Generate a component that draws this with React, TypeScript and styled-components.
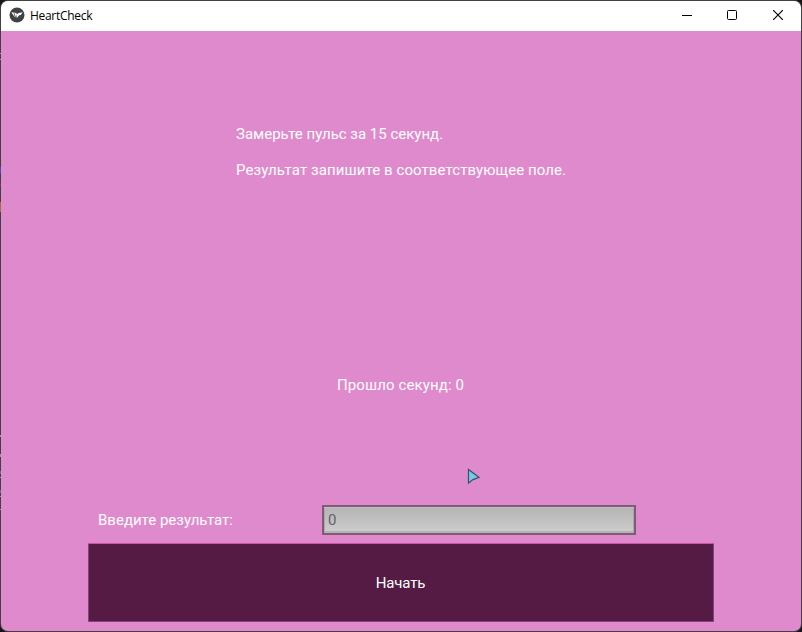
import React from 'react';
import styled, { createGlobalStyle } from 'styled-components';

const GlobalStyle = createGlobalStyle`
  * { box-sizing: border-box; }
  html, body { margin: 0; width: 802px; height: 632px; overflow: hidden; background: #161415; }
`;

/* The window's thin frame lets a few specks of the desktop show at its left edge. */
const Frame = styled.div`
  width: 802px;
  height: 632px;
  padding: 1px;
  border-radius: 8px;
  background:
    linear-gradient(#999, #999) 0 53px / 1px 1px no-repeat,
    linear-gradient(#999, #999) 0 59px / 1px 1px no-repeat,
    linear-gradient(#3d55b5, #3d55b5) 0 167px / 1px 6px no-repeat,
    linear-gradient(#87383b, #87383b) 0 183px / 1px 3px no-repeat,
    linear-gradient(#a0713f, #a0713f) 0 202px / 1px 10px no-repeat,
    linear-gradient(#999, #999) 0 435px / 1px 2px no-repeat,
    linear-gradient(#999, #999) 0 454px / 1px 3px no-repeat,
    linear-gradient(#4778ac, #4778ac) 0 471px / 1px 3px no-repeat,
    linear-gradient(#999, #999) 0 477px / 1px 1px no-repeat,
    linear-gradient(#4778ac, #4778ac) 0 490px / 1px 3px no-repeat,
    linear-gradient(#999, #999) 0 496px / 1px 1px no-repeat,
    linear-gradient(#999, #999) 0 509px / 1px 1px no-repeat,
    #414042;
`;

const Window = styled.main`
  width: 800px;
  height: 630px;
  display: flex;
  flex-direction: column;
  border-radius: 7px;
  overflow: hidden;
  background: #df8acc;
`;

const TitleBar = styled.header`
  height: 30px;
  flex: none;
  display: flex;
  align-items: center;
  padding: 0 0 2px 8px;
  background: #fff;
`;

const Title = styled.span`
  flex: 1;
  margin: 2px 0 0 5px;
  font: 12px/16px "Open Sans", "Noto Sans", sans-serif;
  letter-spacing: -0.3px;
  color: #000;
`;

const Controls = styled.div`
  display: flex;
`;

const Control = styled.button`
  width: 46px;
  height: 28px;
  padding: 0;
  border: 0;
  background: none;
  display: grid;
  place-items: center;

  &:first-child { width: 45px; padding-left: 1px; }
`;

const Content = styled.section`
  position: relative;
  height: 600px;
  display: flex;
  flex-direction: column;
  font: 15px/18px Roboto, sans-serif;
  color: #fff;
`;

const Instructions = styled.div`
  height: 241px;
  display: flex;
  flex-direction: column;
  justify-content: center;
  gap: 18px;
  padding-left: 235px;
`;

const Line = styled.p<{ $spacing?: number }>`
  margin: 0;
  white-space: nowrap;
  letter-spacing: ${({ $spacing = 0 }) => $spacing}px;
`;

const Timer = styled.div`
  height: 225px;
  margin-bottom: 8px;
  padding-right: 1px;
  display: flex;
  align-items: center;
  justify-content: center;
`;

const Form = styled.form`
  width: 626px;
  margin-left: 87px;
`;

const Row = styled.div`
  height: 30px;
  display: grid;
  grid-template-columns: 234px 314px;
  align-items: center;
`;

const Label = styled.label`
  padding-left: 10px;
  white-space: nowrap;
`;

const Input = styled.input`
  width: 314px;
  height: 30px;
  padding: 0 4px;
  border: 2px solid #83597a;
  border-radius: 0;
  outline: 0;
  background: linear-gradient(#b3b3b3, #cecece);
  box-shadow: inset 0 1px #c1bfc0, inset 1px 0 #aaa7a9, inset -1px 0 #aaa7a9, inset 0 -2px #b4b3b3;
  font: 15px/18px Roboto, sans-serif;
  color: #626262;
`;

const StartButton = styled.button`
  width: 626px;
  height: 79px;
  margin-top: 8px;
  padding: 0 1px 0 0;
  border: 1px solid #85437a;
  border-top-color: #cd51ad;
  border-radius: 1px;
  background: #551b45;
  font: 15px/18px Roboto, sans-serif;
  letter-spacing: -0.12px;
  color: #fff;
`;

const Cursor = styled.svg`
  position: absolute;
  left: 466px;
  top: 437px;
`;

const AppIcon = () => (
  <svg width="16" height="16" viewBox="0 0 16 16">
    <circle cx="8" cy="8" r="7.5" fill="#414245" />
    <path d="M2.3 5.2 4.6 5.6 6 10.4ZM5.1 5.3 8 6.8 7.1 11ZM8 6.9 9.9 6.1 13.7 5.3 11.8 7.9 10.2 8.3 7.9 11Z" fill="#fff" />
  </svg>
);

export default function App() {
  return (
    <>
      <GlobalStyle />
      <Frame>
        <Window>
          <TitleBar>
            <AppIcon />
            <Title>HeartCheck</Title>
            <Controls>
              <Control aria-label="Minimize">
                <svg width="10" height="10"><path d="M0 5.5H10" stroke="#000" /></svg>
              </Control>
              <Control aria-label="Maximize">
                <svg width="10" height="10"><rect x=".5" y=".5" width="9" height="9" rx="1" fill="none" stroke="#000" /></svg>
              </Control>
              <Control aria-label="Close">
                <svg width="10" height="10"><path d="M0 0 10 10M10 0 0 10" stroke="#000" strokeWidth="1.15" /></svg>
              </Control>
            </Controls>
          </TitleBar>
          <Content>
            <Instructions>
              <Line>Замерьте пульс за 15 секунд.</Line>
              <Line $spacing={0.09}>Результат запишите в соответствующее поле.</Line>
            </Instructions>
            <Timer><Line $spacing={0.12}>Прошло секунд: 0</Line></Timer>
            <Form>
              <Row>
                <Label htmlFor="result">Введите результат:</Label>
                <Input id="result" defaultValue="0" />
              </Row>
              <StartButton type="button">Начать</StartButton>
            </Form>
            <Cursor width="14" height="17" viewBox="0 0 14 17">
              <path d="M1.5 1.5 6.5 5.2 12 9.3 6 11.6 1.5 15Z" fill="#78cae4" stroke="#35516b" strokeWidth="1.2" />
            </Cursor>
          </Content>
        </Window>
      </Frame>
    </>
  );
}
